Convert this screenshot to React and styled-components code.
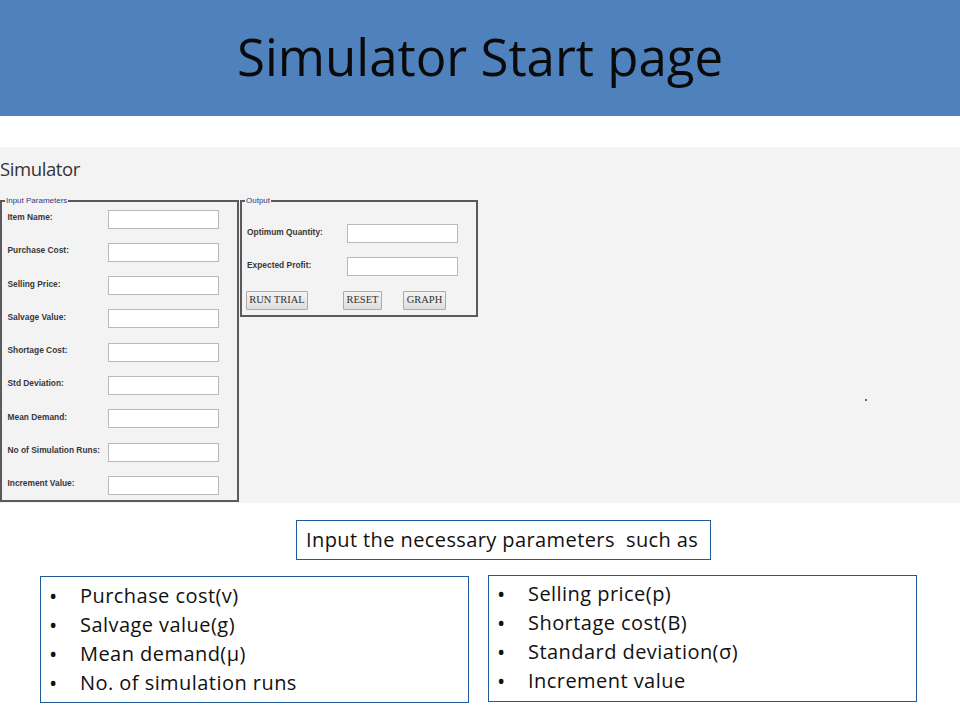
import React from "react";
import styled, { createGlobalStyle } from "styled-components";

const Global = createGlobalStyle`
  html, body { margin: 0; padding: 0; background: #fff; }
  body { width: 960px; height: 720px; overflow: hidden; font-family: "Open Sans", sans-serif; color: #111; }
`;
const Page = styled.div`display: flex; flex-direction: column; width: 960px; height: 720px;`;
const Banner = styled.header`
  height: 116px; background: #4f81bd; display: flex; align-items: center; justify-content: center;
`;
const Title = styled.h1`
  margin: 0; font: 400 51px/1 "Open Sans", sans-serif; color: #0a0a0a; padding-bottom: 4px;
`;
const Shot = styled.section`
  position: relative; margin-top: 31px; height: 356px; background: #f3f3f3; box-sizing: border-box; padding-top: 10px;
`;
const AppTitle = styled.h2`
  margin: 0; height: 43px; font: 400 18.5px/24px "Open Sans", sans-serif; color: #333; letter-spacing: -0.4px;
`;
const Panels = styled.div`display: flex; gap: 1px; align-items: flex-start;`;
const Group = styled.fieldset`
  position: relative; box-sizing: border-box; margin: 0; width: ${p => p.$w}px; height: ${p => p.$h}px;
  padding: ${p => p.$pad}; border: 2px solid #5a5a5a; background: #f3f3f3; min-width: 0;
`;
const Legend = styled.span`
  position: absolute; top: -6px; left: 3px; padding: 0 1px; background: #f3f3f3;
  font: 400 8px/10px "Liberation Sans", sans-serif; color: #2f3a80;
`;
const Row = styled.div`
  display: flex; align-items: center; height: 20px; margin-bottom: ${p => p.$gap}px;
`;
const Label = styled.label`
  width: ${p => p.$w}px; flex: none; font: 700 8.4px/12px "Liberation Sans", sans-serif; color: #383838;
  box-sizing: border-box; height: 16px;
`;
const Field = styled.div`
  width: 111px; height: 19px; box-sizing: border-box; background: #fff; border: 1px solid #b9b9b9;
`;
const Buttons = styled.div`display: flex; margin: 2px 0 0 -1px;`;
const Btn = styled.button`
  box-sizing: border-box; height: 19px; width: ${p => p.$w}px; margin-right: ${p => p.$mr}px; padding: 0;
  background: linear-gradient(#f4f4f4, #dedede); border: 1px solid #aaa; border-radius: 1px;
  font: 400 10.5px/1 "Liberation Serif", serif; color: #333;
`;
const Speck = styled.i`
  position: absolute; left: 865px; top: 252px; width: 2px; height: 2px; background: #666;
`;
const Bottom = styled.section`position: relative; flex: 1; display: flex; flex-direction: column;`;
const Lead = styled.div`
  box-sizing: border-box; align-self: flex-start; margin: 17px 0 0 296px; width: 415px; height: 40px; padding-left: 9px;
  border: 1px solid #1f5a96; font: 400 20px/37px "Open Sans", sans-serif; letter-spacing: 0.4px; white-space: pre;
`;
const Columns = styled.div`display: flex; gap: 19px; margin: 15px 0 0 40px; align-items: flex-start;`;
const Box = styled.ul`
  box-sizing: border-box; list-style: none; margin: ${p => p.$top}px 0 0; padding: ${p => p.$pad}px 0 0 8px; width: 429px; height: ${p => p.$h}px;
  border: 1px solid #1f5a96;
`;
const Item = styled.li`
  display: flex; height: 29px; font: 400 20px/29px "Open Sans", sans-serif; letter-spacing: 0.45px;
  &::before { content: "•"; width: 31px; flex: none; font-size: 22px; }
`;

const inputs = ["Item Name:", "Purchase Cost:", "Selling Price:", "Salvage Value:", "Shortage Cost:", "Std Deviation:", "Mean Demand:", "No of Simulation Runs:", "Increment Value:"];
const left = ["Purchase cost(v)", "Salvage value(g)", "Mean demand(µ)", "No. of simulation runs"];
const right = ["Selling price(p)", "Shortage cost(B)", "Standard deviation(σ)", "Increment value"];

export default function App() {
  return (
    <Page>
      <Global />
      <Banner><Title>Simulator Start page</Title></Banner>
      <Shot>
        <AppTitle>Simulator</AppTitle>
        <Panels>
          <Group $w={239} $h={302} $pad="7px 0 0 5.5px">
            <Legend>Input Parameters</Legend>
            {inputs.map(t => (
              <Row key={t} $gap={13.3}><Label $w={100.5}>{t}</Label><Field /></Row>
            ))}
          </Group>
          <Group $w={238} $h={117} $pad="21.5px 0 0 5px">
            <Legend>Output</Legend>
            <Row $gap={13.3}><Label $w={99.5}>Optimum Quantity:</Label><Field /></Row>
            <Row $gap={14}><Label $w={99.5}>Expected Profit:</Label><Field /></Row>
            <Buttons>
              <Btn $w={62} $mr={35}>RUN TRIAL</Btn>
              <Btn $w={39} $mr={21}>RESET</Btn>
              <Btn $w={43} $mr={0}>GRAPH</Btn>
            </Buttons>
          </Group>
        </Panels>
        <Speck />
      </Shot>
      <Bottom>
        <Lead>Input the necessary parameters  such as</Lead>
        <Columns>
          <Box $h={127} $top={1} $pad={4}>{left.map(t => <Item key={t}>{t}</Item>)}</Box>
          <Box $h={127} $top={0} $pad={3}>{right.map(t => <Item key={t}>{t}</Item>)}</Box>
        </Columns>
      </Bottom>
    </Page>
  );
}
